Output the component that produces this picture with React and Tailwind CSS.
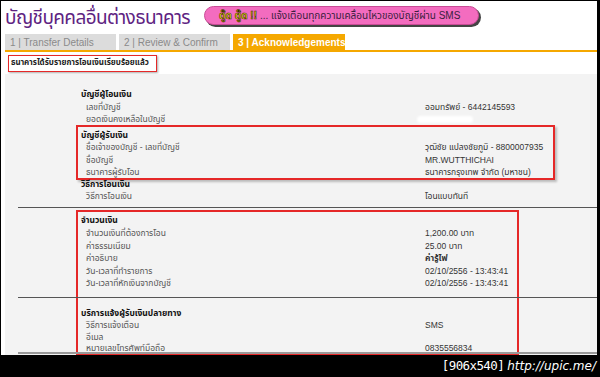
const thai = "font-['Liberation_Sans','Tahoma','Noto_Sans_Thai',sans-serif]";

const Row = ({ label, value, bold }) => (
  <div className="flex h-[12.5px] items-center whitespace-nowrap">
    <div className="w-[344px] pl-[5px] text-[#555]">{label}</div>
    <div className={bold ? 'font-bold text-[#333]' : 'text-[#333]'}>{value}</div>
  </div>
);

const Heading = ({ children }) => (
  <div className="h-[12.5px] flex items-center font-bold text-[#111] whitespace-nowrap">{children}</div>
);

const Tab = ({ children, active }) => (
  <div
    className={
      active
        ? 'w-[112px] h-[16px] flex items-center pl-[5px] bg-[#f5a800] text-white font-bold whitespace-nowrap'
        : 'w-[111px] h-[16px] flex items-center pl-[5px] bg-[#dcdcdc] text-[#8a8a8a] whitespace-nowrap'
    }
  >
    {children}
  </div>
);

export default function App() {
  return (
    <div className={`w-[600px] h-[377px] bg-black overflow-hidden ${thai}`}>
      <div className="ml-[1px] mt-[1px] w-[596px] h-[354px] bg-white overflow-hidden flex flex-col">
        {/* header */}
        <div className="flex items-start h-[34px]">
          <div className="w-[203px] pl-[4px] mt-[5px] text-[19px] leading-[24px] text-[#5e2382] tracking-[-0.6px] whitespace-nowrap">
            บัญชีบุคคลอื่นต่างธนาคาร
          </div>
          <div className="mt-[5px] h-[19px] w-[275px] rounded-full bg-[#f36cbf] border border-[#c94c96] shadow-[2px_2px_0_#444] flex items-center pl-[14px] text-[10px] whitespace-nowrap">
            <span className="text-[#f5e81a] font-bold [-webkit-text-stroke:0.6px_#3a2a00] mr-[3px]">ตู๊ด ตู๊ด !!</span>
            <span className="text-[#3a1f40]">... แจ้งเตือนทุกความเคลื่อนไหวของบัญชีผ่าน SMS</span>
          </div>
        </div>

        {/* tabs */}
        <div className="ml-[4px] flex gap-[3px] text-[10px]">
          <Tab>1 | Transfer Details</Tab>
          <Tab>2 | Review &amp; Confirm</Tab>
          <Tab active>3 | Acknowledgements</Tab>
        </div>
        <div className="ml-[4px] h-[2px] bg-[#f5a800]" />

        {/* alert */}
        <div className="ml-[7px] mt-[3px] w-[149px] h-[17px] border-[1.5px] border-[#e52828] shadow-[1px_1px_2px_#aaa] flex items-center pl-[2px] text-[8px] font-bold text-[#222] whitespace-nowrap overflow-hidden">
          ธนาคารได้รับรายการโอนเงินเรียบร้อยแล้ว
        </div>

        {/* panel */}
        <div className="ml-[4px] mt-[2px] flex-1 bg-[#f3f3f3] text-[8.5px] relative">
          <div className="pl-[76px] pt-[15px]">
            <Heading>บัญชีผู้โอนเงิน</Heading>
            <Row label="เลขที่บัญชี" value="ออมทรัพย์ - 6442145593" />
            <div className="flex h-[12.5px] items-center whitespace-nowrap">
              <div className="w-[344px] pl-[5px] text-[#555]">ยอดเงินคงเหลือในบัญชี</div>
              <div className="w-[56px] h-[7px] rounded-full bg-white blur-[1px] -ml-[8px]" />
            </div>
          </div>

          <div className="ml-[71px] mt-[-1px] w-[479px] h-[55px] border-2 border-[#e52828] shadow-[2px_2px_2px_#bbb] pl-[3px] pt-[2px]">
            <Heading>บัญชีผู้รับเงิน</Heading>
            <Row label="ชื่อเจ้าของบัญชี - เลขที่บัญชี" value="วุฒิชัย แปลงชัยภูมิ - 8800007935" />
            <Row label="ชื่อบัญชี" value="MR.WUTTHICHAI" />
            <Row label="ธนาคารผู้รับโอน" value="ธนาคารกรุงเทพ จำกัด (มหาชน)" />
          </div>

          <div className="pl-[76px] -mt-[2px]">
            <Heading>วิธีการโอนเงิน</Heading>
            <Row label="วิธีการโอนเงิน" value="โอนแบบทันที" />
          </div>

          <div className="ml-[13px] mt-[4px] h-[1px] bg-[#555]" />

          <div className="ml-[71px] mt-[2px] w-[443px] h-[145px] border-2 border-[#e52828] pl-[3px] pt-[2px]">
            <Heading>จำนวนเงิน</Heading>
            <div className="pt-[1px]">
              <Row label="จำนวนเงินที่ต้องการโอน" value="1,200.00 บาท" />
              <Row label="ค่าธรรมเนียม" value="25.00  บาท" />
              <Row label="ค่าอธิบาย" value="ค่ารู้ไฟ" bold />
              <Row label="วัน-เวลาที่ทำรายการ" value="02/10/2556 - 13:43:41" />
              <Row label="วัน-เวลาที่หักเงินจากบัญชี" value="02/10/2556 - 13:43:41" />
            </div>
            <div className="h-[17px]" />
            <Heading>บริการแจ้งผู้รับเงินปลายทาง</Heading>
            <Row label="วิธีการแจ้งเตือน" value="SMS" />
            <div className="flex h-[10px] items-center whitespace-nowrap">
              <div className="w-[344px] pl-[5px] text-[#555]">อีเมล</div>
            </div>
            <Row label="หมายเลขโทรศัพท์มือถือ" value="0835556834" />
          </div>

          {/* dividers crossing the red box */}
          <div className="absolute left-[13px] right-0 top-[223px] h-[1px] bg-[#555]" />
          <div className="absolute left-[13px] right-0 bottom-[1px] h-[2px] bg-[#999]" />
        </div>
      </div>

      {/* footer */}
      <div className="h-[22px] flex items-center justify-end pr-[4px] text-white leading-none whitespace-nowrap">
        <span className="font-['DejaVu_Sans_Mono',monospace] text-[12.5px] tracking-[-0.6px]">[906x540]</span>
        <span className="ml-[3px] font-['DejaVu_Sans',sans-serif] italic text-[12px]">http://upic.me/</span>
      </div>
    </div>
  );
}
